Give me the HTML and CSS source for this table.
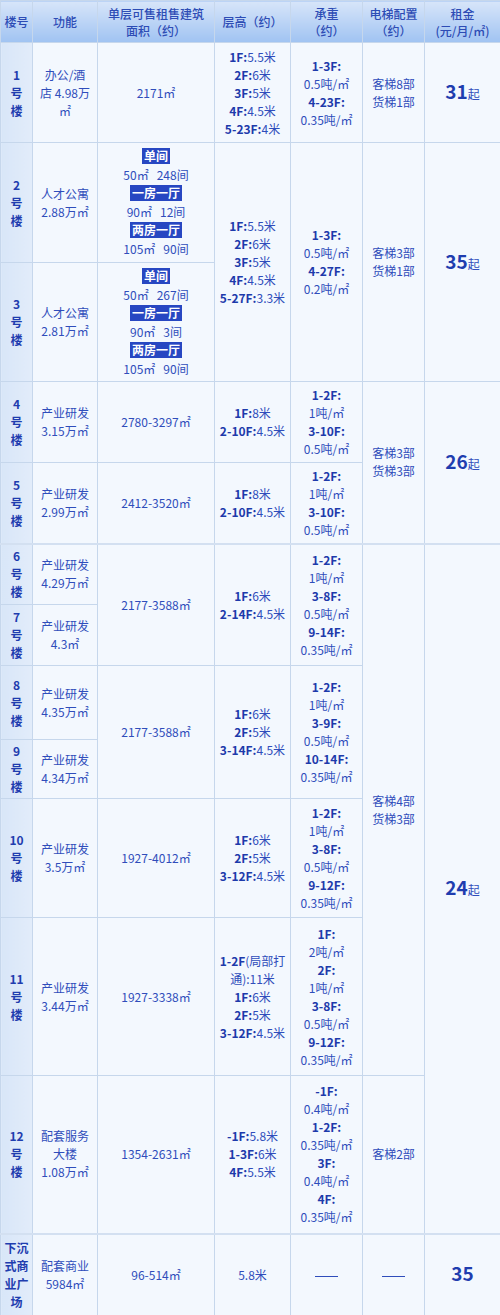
FILE: index.html
```html
<!DOCTYPE html>
<html lang="zh">
<head>
<meta charset="utf-8">
<link rel="stylesheet" href="styles.css">
</head>
<body>
<table class="grid">
  <colgroup>
    <col class="c1"><col class="c2"><col class="c3"><col class="c4"><col class="c5"><col class="c6"><col class="c7">
  </colgroup>
  <thead>
    <tr class="h-head">
      <th>楼号</th>
      <th>功能</th>
      <th>单层可售租售建筑<br>面积（约）</th>
      <th>层高（约）</th>
      <th>承重<br>（约）</th>
      <th>电梯配置<br>（约）</th>
      <th>租金<br>(元/月/㎡)</th>
    </tr>
  </thead>
  <tbody>
    <tr class="h100">
      <td class="no">1<br>号<br>楼</td>
      <td>办公/酒<br>店 4.98万<br>㎡</td>
      <td>2171㎡</td>
      <td><b>1F:</b>5.5米<br><b>2F:</b>6米<br><b>3F:</b>5米<br><b>4F:</b>4.5米<br><b>5-23F:</b>4米</td>
      <td><b>1-3F:</b><br>0.5吨/㎡<br><b>4-23F:</b><br>0.35吨/㎡</td>
      <td>客梯8部<br>货梯1部</td>
      <td><span class="rent">31</span>起</td>
    </tr>
    <tr class="h120">
      <td class="no">2<br>号<br>楼</td>
      <td>人才公寓<br>2.88万㎡</td>
      <td class="units">
        <span class="tag">单间</span><span class="u">50㎡&nbsp;&nbsp;&nbsp;248间</span>
        <span class="tag">一房一厅</span><span class="u">90㎡&nbsp;&nbsp;&nbsp;12间</span>
        <span class="tag">两房一厅</span><span class="u">105㎡&nbsp;&nbsp;&nbsp;90间</span>
      </td>
      <td rowspan="2"><b>1F:</b>5.5米<br><b>2F:</b>6米<br><b>3F:</b>5米<br><b>4F:</b>4.5米<br><b>5-27F:</b>3.3米</td>
      <td rowspan="2"><b>1-3F:</b><br>0.5吨/㎡<br><b>4-27F:</b><br>0.2吨/㎡</td>
      <td rowspan="2">客梯3部<br>货梯1部</td>
      <td rowspan="2"><span class="rent">35</span>起</td>
    </tr>
    <tr class="h119">
      <td class="no">3<br>号<br>楼</td>
      <td>人才公寓<br>2.81万㎡</td>
      <td class="units">
        <span class="tag">单间</span><span class="u">50㎡&nbsp;&nbsp;&nbsp;267间</span>
        <span class="tag">一房一厅</span><span class="u">90㎡&nbsp;&nbsp;&nbsp;3间</span>
        <span class="tag">两房一厅</span><span class="u">105㎡&nbsp;&nbsp;&nbsp;90间</span>
      </td>
    </tr>
    <tr class="h81">
      <td class="no">4<br>号<br>楼</td>
      <td>产业研发<br>3.15万㎡</td>
      <td>2780-3297㎡</td>
      <td><b>1F:</b>8米<br><b>2-10F:</b>4.5米</td>
      <td><b>1-2F:</b><br>1吨/㎡<br><b>3-10F:</b><br>0.5吨/㎡</td>
      <td rowspan="2">客梯3部<br>货梯3部</td>
      <td rowspan="2"><span class="rent">26</span>起</td>
    </tr>
    <tr class="h81">
      <td class="no">5<br>号<br>楼</td>
      <td>产业研发<br>2.99万㎡</td>
      <td>2412-3520㎡</td>
      <td><b>1F:</b>8米<br><b>2-10F:</b>4.5米</td>
      <td><b>1-2F:</b><br>1吨/㎡<br><b>3-10F:</b><br>0.5吨/㎡</td>
    </tr>
    <tr class="h61 split">
      <td class="no">6<br>号<br>楼</td>
      <td>产业研发<br>4.29万㎡</td>
      <td rowspan="2">2177-3588㎡</td>
      <td rowspan="2"><b>1F:</b>6米<br><b>2-14F:</b>4.5米</td>
      <td rowspan="2"><b>1-2F:</b><br>1吨/㎡<br><b>3-8F:</b><br>0.5吨/㎡<br><b>9-14F:</b><br>0.35吨/㎡</td>
      <td rowspan="6">客梯4部<br>货梯3部</td>
      <td rowspan="7"><span class="rent">24</span>起</td>
    </tr>
    <tr class="h61">
      <td class="no">7<br>号<br>楼</td>
      <td>产业研发<br>4.3㎡</td>
    </tr>
    <tr class="h74">
      <td class="no">8<br>号<br>楼</td>
      <td>产业研发<br>4.35万㎡</td>
      <td rowspan="2">2177-3588㎡</td>
      <td rowspan="2"><b>1F:</b>6米<br><b>2F:</b>5米<br><b>3-14F:</b>4.5米</td>
      <td rowspan="2"><b>1-2F:</b><br>1吨/㎡<br><b>3-9F:</b><br>0.5吨/㎡<br><b>10-14F:</b><br>0.35吨/㎡</td>
    </tr>
    <tr class="h59">
      <td class="no">9<br>号<br>楼</td>
      <td>产业研发<br>4.34万㎡</td>
    </tr>
    <tr class="h119">
      <td class="no">10<br>号<br>楼</td>
      <td>产业研发<br>3.5万㎡</td>
      <td>1927-4012㎡</td>
      <td><b>1F:</b>6米<br><b>2F:</b>5米<br><b>3-12F:</b>4.5米</td>
      <td><b>1-2F:</b><br>1吨/㎡<br><b>3-8F:</b><br>0.5吨/㎡<br><b>9-12F:</b><br>0.35吨/㎡</td>
    </tr>
    <tr class="h158">
      <td class="no">11<br>号<br>楼</td>
      <td>产业研发<br>3.44万㎡</td>
      <td>1927-3338㎡</td>
      <td><b>1-2F</b>(局部打<br>通):11米<br><b>1F:</b>6米<br><b>2F:</b>5米<br><b>3-12F:</b>4.5米</td>
      <td><b>1F:</b><br>2吨/㎡<br><b>2F:</b><br>1吨/㎡<br><b>3-8F:</b><br>0.5吨/㎡<br><b>9-12F:</b><br>0.35吨/㎡</td>
    </tr>
    <tr class="h158">
      <td class="no">12<br>号<br>楼</td>
      <td>配套服务<br>大楼<br>1.08万㎡</td>
      <td>1354-2631㎡</td>
      <td><b>-1F:</b>5.8米<br><b>1-3F:</b>6米<br><b>4F:</b>5.5米</td>
      <td><b>-1F:</b><br>0.4吨/㎡<br><b>1-2F:</b><br>0.35吨/㎡<br><b>3F:</b><br>0.4吨/㎡<br><b>4F:</b><br>0.35吨/㎡</td>
      <td>客梯2部</td>
    </tr>
    <tr class="h82 split">
      <td class="no">下沉<br>式商<br>业广<br>场</td>
      <td>配套商业<br>5984㎡</td>
      <td>96-514㎡</td>
      <td>5.8米</td>
      <td><span class="dash"></span></td>
      <td><span class="dash"></span></td>
      <td><span class="rent">35</span></td>
    </tr>
  </tbody>
</table>
</body>
</html>
```

FILE: styles.css
```css
html, body {
  margin: 0;
  padding: 0;
  background: #f3f8fe;
}

body {
  width: 500px;
  font-family: "Noto Sans CJK SC", "Noto Sans", sans-serif;
  font-size: 12px;
  color: #2f4dbb;
}

.grid {
  width: 500px;
  border-collapse: collapse;
  table-layout: fixed;
}

.c1 { width: 32px; }
.c2 { width: 65px; }
.c3 { width: 117px; }
.c4 { width: 76px; }
.c5 { width: 72px; }
.c6 { width: 62px; }
.c7 { width: 76px; }

.grid th,
.grid td {
  border: 1px solid #c6d7ec;
  text-align: center;
  vertical-align: middle;
  padding: 0 1px;
  line-height: 18px;
}

.grid th {
  background: linear-gradient(#d7e5f9, #a0c3f2);
  color: #2d4cb5;
  font-weight: 500;
  font-size: 12px;
  line-height: 17px;
}

.grid td {
  background: #f3f8fe;
}

.grid td.no {
  background: linear-gradient(90deg, #d8e6f8, #e2ecfa);
  color: #1f3daf;
  font-weight: 700;
}

.grid b {
  color: #1d3aab;
  font-weight: 700;
}

.h-head { height: 42px; }
.h100 { height: 100px; }
.h120 { height: 120px; }
.h119 { height: 119px; }
.h81 { height: 81px; }
.h61 { height: 61px; }
.h74 { height: 74px; }
.h59 { height: 59px; }
.h158 { height: 158px; }
.h82 { height: 82px; }

.split td { border-top: 2px solid #d3e0f1; }

.units .tag {
  display: inline-block;
  background: #2747c2;
  color: #ffffff;
  font-weight: 700;
  line-height: 16px;
  padding: 0 2px;
  margin-top: 1px;
}

.units .u {
  display: block;
  line-height: 19px;
}

.rent {
  font-size: 19px;
  font-weight: 700;
  color: #1f3daf;
}

.dash {
  display: inline-block;
  width: 23px;
  border-top: 1px solid #2f4dbb;
  vertical-align: middle;
}
```
